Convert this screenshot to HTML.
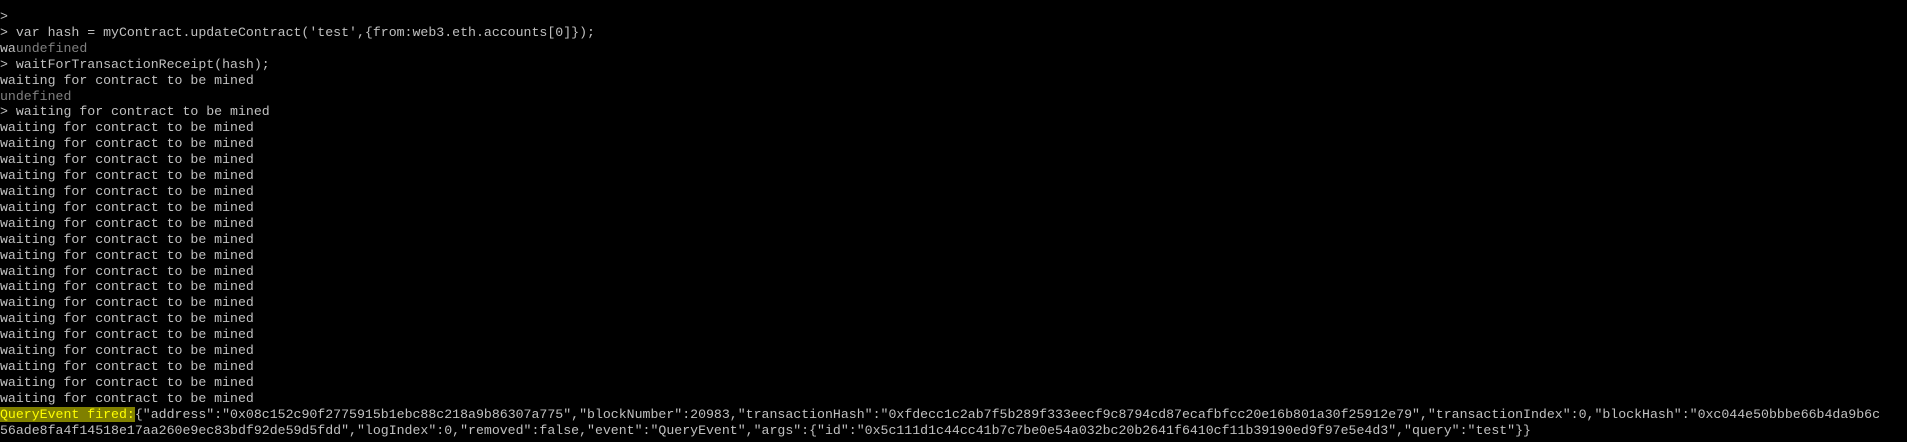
<!DOCTYPE html>
<html><head><meta charset="utf-8"><style>
html,body{margin:0;padding:0;background:#000;width:1907px;height:442px;overflow:hidden}
pre{margin:0;position:absolute;left:0;top:9px;font-family:"Liberation Mono",monospace;font-size:13.23px;line-height:15.91px;color:#c0c0c0;white-space:pre}
.g{color:#808080}
.h{background:#808000;color:#ffff00}
</style></head><body><pre>&gt;
&gt; var hash = myContract.updateContract('test',{from:web3.eth.accounts[0]});
wa<span class="g">undefined</span>
&gt; waitForTransactionReceipt(hash);
waiting for contract to be mined
<span class="g">undefined</span>
&gt; waiting for contract to be mined
waiting for contract to be mined
waiting for contract to be mined
waiting for contract to be mined
waiting for contract to be mined
waiting for contract to be mined
waiting for contract to be mined
waiting for contract to be mined
waiting for contract to be mined
waiting for contract to be mined
waiting for contract to be mined
waiting for contract to be mined
waiting for contract to be mined
waiting for contract to be mined
waiting for contract to be mined
waiting for contract to be mined
waiting for contract to be mined
waiting for contract to be mined
waiting for contract to be mined
<span class="h">QueryEvent fired:</span>{"address":"0x08c152c90f2775915b1ebc88c218a9b86307a775","blockNumber":20983,"transactionHash":"0xfdecc1c2ab7f5b289f333eecf9c8794cd87ecafbfcc20e16b801a30f25912e79","transactionIndex":0,"blockHash":"0xc044e50bbbe66b4da9b6c
56ade8fa4f14518e17aa260e9ec83bdf92de59d5fdd","logIndex":0,"removed":false,"event":"QueryEvent","args":{"id":"0x5c111d1c44cc41b7c7be0e54a032bc20b2641f6410cf11b39190ed9f97e5e4d3","query":"test"}}</pre></body></html>
